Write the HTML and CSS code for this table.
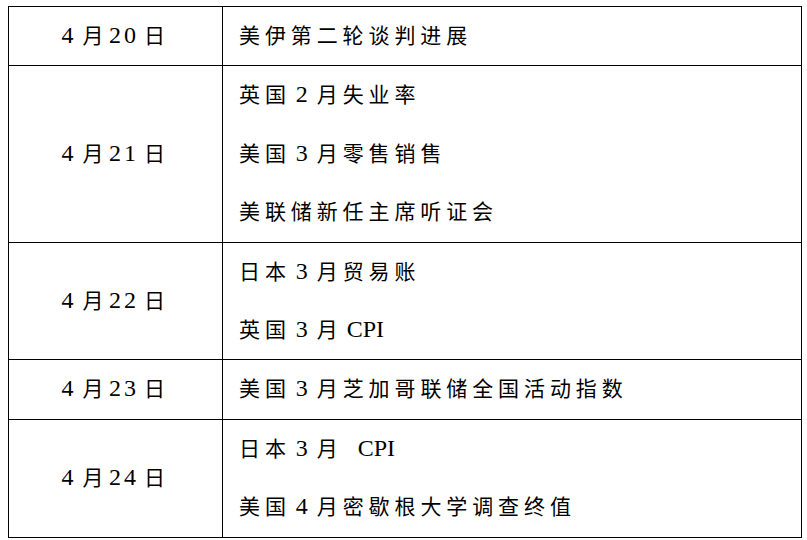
FILE: index.html
```html
<!DOCTYPE html>
<html lang="zh">
<head>
<meta charset="utf-8">
<link rel="stylesheet" href="styles.css">
</head>
<body>
<table class="cal">
  <tr>
    <td class="date"><span class="n m">4</span>月<span class="n d">20</span>日</td>
    <td class="events"><div class="ev">美伊第二轮谈判进展</div></td>
  </tr>
  <tr>
    <td class="date"><span class="n m">4</span>月<span class="n d">21</span>日</td>
    <td class="events">
      <div class="ev">英国<span class="n">2</span>月失业率</div>
      <div class="ev">美国<span class="n">3</span>月零售销售</div>
      <div class="ev">美联储新任主席听证会</div>
    </td>
  </tr>
  <tr>
    <td class="date"><span class="n m">4</span>月<span class="n d">22</span>日</td>
    <td class="events">
      <div class="ev">日本<span class="n">3</span>月贸易账</div>
      <div class="ev">英国<span class="n">3</span>月<span class="w gap-s">CPI</span></div>
    </td>
  </tr>
  <tr>
    <td class="date"><span class="n m">4</span>月<span class="n d">23</span>日</td>
    <td class="events"><div class="ev">美国<span class="n">3</span>月芝加哥联储全国活动指数</div></td>
  </tr>
  <tr>
    <td class="date"><span class="n m">4</span>月<span class="n d">24</span>日</td>
    <td class="events">
      <div class="ev">日本<span class="n">3</span>月<span class="w gap-l">CPI</span></div>
      <div class="ev">美国<span class="n">4</span>月密歇根大学调查终值</div>
    </td>
  </tr>
</table>
</body>
</html>
```

FILE: styles.css
```css
html, body {
  background: #fff;
}
body {
  margin: 6px 0 0 8px;
  font-family: "Liberation Serif", "Noto Sans CJK SC", serif;
  color: #000;
}
.cal {
  border-collapse: collapse;
  width: 794px;
  table-layout: fixed;
}
.cal td {
  border: 1px solid #000;
  padding: 0;
  font-size: 21px;
  letter-spacing: 4.9px;
  line-height: 58.4px;
  height: 58px;
  vertical-align: middle;
}
.cal td.date {
  width: 213px;
  text-align: center;
  letter-spacing: 4.5px;
}
.cal td.events {
  padding-left: 16px;
}
.ev {
  white-space: nowrap;
  height: 58.4px;
}
.n {
  font-size: 24px;
  line-height: 1;
  letter-spacing: 3px;
  padding: 0 6px 0 5px;
}
.date .n.m {
  padding: 0 6px 0 0;
}
.date .n.d {
  padding: 0 5px 0 1px;
}
.w {
  font-size: 24px;
  line-height: 1;
  letter-spacing: 0;
}
.gap-s {
  padding-left: 4px;
}
.gap-l {
  padding-left: 15px;
}
```
